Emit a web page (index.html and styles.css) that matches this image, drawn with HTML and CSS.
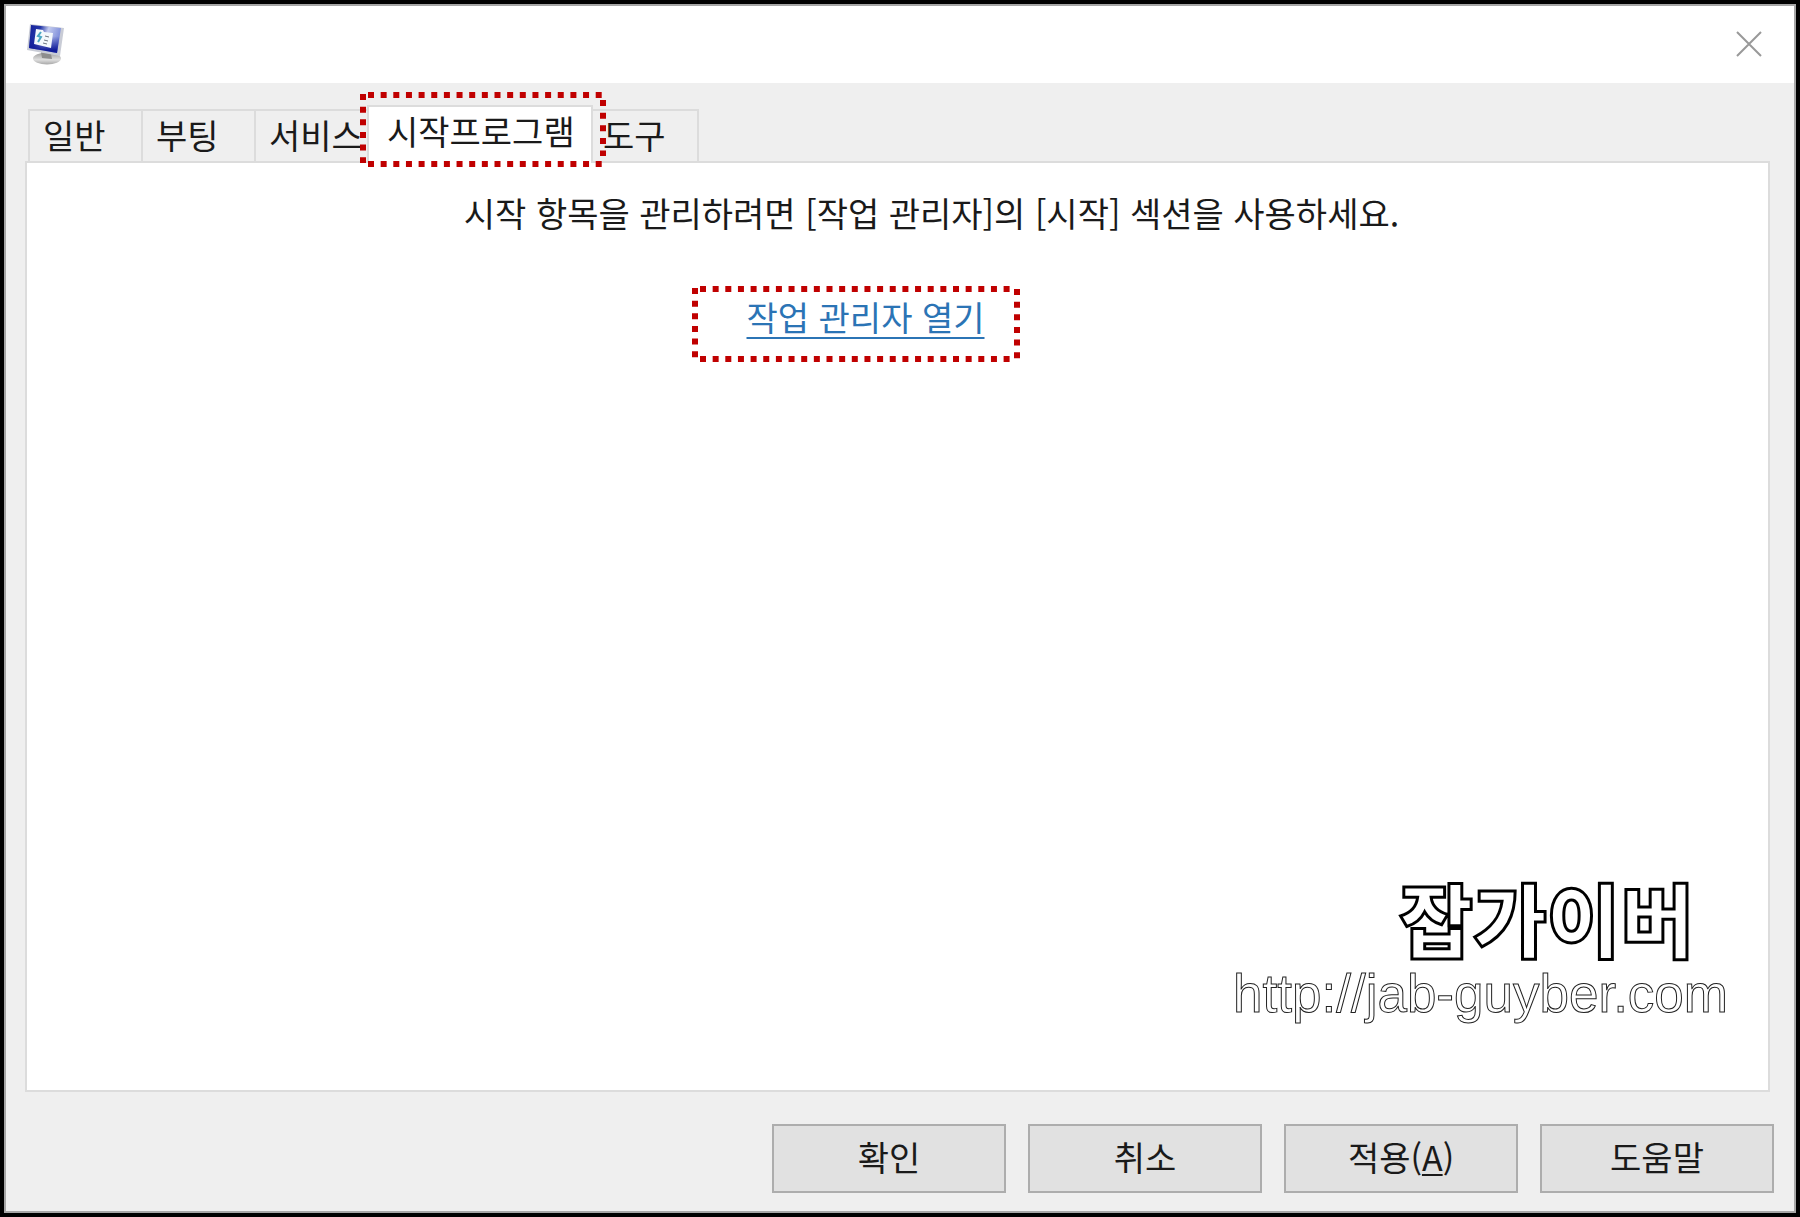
FILE: index.html
```html
<!DOCTYPE html>
<html lang="ko">
<head>
<meta charset="utf-8">
<meta name="viewport" content="width=device-width, initial-scale=1">
<title>시스템 구성</title>
<link rel="stylesheet" href="styles.css">
</head>
<body>
<div class="window">
  <header class="titlebar">
    <svg class="app-icon" viewBox="0 0 38 42" aria-hidden="true">
      <defs>
        <linearGradient id="screen" x1="0" y1="0" x2="1" y2="0.3">
          <stop offset="0" stop-color="#14209a"/>
          <stop offset="0.35" stop-color="#2436a8"/>
          <stop offset="0.6" stop-color="#c3cbee"/>
          <stop offset="1" stop-color="#7c8cda"/>
        </linearGradient>
        <linearGradient id="shade" x1="0" y1="0" x2="0" y2="1">
          <stop offset="0.4" stop-color="#101c98" stop-opacity="0"/>
          <stop offset="0.9" stop-color="#101c98"/>
        </linearGradient>
        <linearGradient id="foot" x1="0" y1="0" x2="0" y2="1">
          <stop offset="0" stop-color="#9c9c9c"/>
          <stop offset="0.6" stop-color="#dedede"/>
          <stop offset="1" stop-color="#a8a8a8"/>
        </linearGradient>
      </defs>
      <ellipse cx="21" cy="35.500" rx="14" ry="6" fill="url(#foot)"/>
      <path d="M15 29l10 2 1 5-10-1z" fill="#8d8d8d"/>
      <path d="M4 1L38 5 34 33 1 27z" fill="#c9ccd6"/>
      <path d="M5 2L35 5 31 30 3 25z" fill="url(#screen)"/>
      <path d="M5 2L35 5 31 30 3 25z" fill="url(#shade)"/>
      <path d="M10 6L17 7 18 9 27 10 25 25 8 21z" fill="#f3f8fc"/>
      <path d="M15 9l-3 4 3 1-3 5" fill="none" stroke="#4aa7c4" stroke-width="2"/>
      <path d="M19 13l4 1M18 17l4 1M17 20l4 1" stroke="#6d7580" stroke-width="1"/>
    </svg>
    <button class="close" type="button" aria-label="닫기">
      <svg viewBox="0 0 26 26" aria-hidden="true"><path d="M1 1L25 25M25 1L1 25"/></svg>
    </button>
  </header>

  <main class="body">
    <div class="tabs" role="tablist">
      <button class="tab" type="button" role="tab">일반</button>
      <button class="tab" type="button" role="tab">부팅</button>
      <button class="tab" type="button" role="tab">서비스</button>
      <button class="tab tab-active" type="button" role="tab" aria-selected="true">시작프로그램
        <svg class="mark mark-tab" viewBox="0 0 246 75" aria-hidden="true">
          <path d="M8 3H243"/><path d="M243 8V64"/><path d="M8 72H243"/><path d="M3 2V71"/>
        </svg>
      </button>
      <button class="tab tab-last" type="button" role="tab">도구</button>
    </div>

    <section class="panel" role="tabpanel">
      <p class="message">시작 항목을 관리하려면 [작업 관리자]의 [시작] 섹션을 사용하세요.</p>
      <p class="action">
        <a class="link" href="#">작업 관리자 열기
          <svg class="mark mark-link" viewBox="0 0 328 76" aria-hidden="true">
            <path d="M8 3H320"/><path d="M325 3V73"/><path d="M8 73H320"/><path d="M3 2V73"/>
          </svg></a>
      </p>
      <div class="watermark">
        <div class="watermark-name">잡가이버</div>
        <div class="watermark-url">http://jab-guyber.com</div>
      </div>
    </section>

    <footer class="buttons">
      <button class="button" type="button">확인</button>
      <button class="button" type="button">취소</button>
      <button class="button" type="button">적용(<u>A</u>)</button>
      <button class="button" type="button">도움말</button>
    </footer>
  </main>
</div>
</body>
</html>
```
FILE: styles.css
```css
* {
  box-sizing: border-box;
}

body {
  margin: 0;
  background: #000;
  color: #1a1a1a;
  font-family: "Noto Sans CJK KR", "Noto Sans", sans-serif;
  font-size: 34px;
  line-height: 40px;
}

button {
  font: inherit;
  color: inherit;
}

.window {
  display: flex;
  flex-direction: column;
  min-height: 100vh;
  border: 4px solid #000;
  background: #efefef;
  box-shadow: inset 0 0 0 2px #a6a6a6;
  padding: 2px;
}

.titlebar {
  display: flex;
  justify-content: space-between;
  align-items: flex-start;
  height: 77px;
  padding: 17px 24px 0 20px;
  background: #fff;
}

.app-icon {
  width: 38px;
  height: 42px;
}

.close {
  width: 42px;
  height: 42px;
  padding: 8px;
  border: 0;
  background: none;
}

.close svg {
  display: block;
  width: 26px;
  height: 26px;
  fill: none;
  stroke: #999;
  stroke-width: 2;
}

.body {
  display: flex;
  flex: 1;
  flex-direction: column;
  padding: 22px 20px 18px;
}

.tabs {
  display: flex;
  align-items: flex-end;
  padding-left: 2px;
}

.tab {
  width: 113px;
  height: 52px;
  padding: 0 0 2px 13px;
  border: 2px solid #dcdcdc;
  border-right: 0;
  border-bottom: 0;
  background: #efefef;
  text-align: left;
  white-space: nowrap;
}

.tab-active {
  position: relative;
  z-index: 1;
  width: 226px;
  height: 58px;
  margin-bottom: -2px;
  padding: 0 0 8px 18px;
  border-right: 2px solid #dcdcdc;
  background: #fff;
}

.tab-last {
  width: 106px;
  padding-left: 10px;
  border-left: 0;
  border-right: 2px solid #dcdcdc;
}

.mark {
  position: absolute;
  fill: none;
  stroke: #c00000;
  stroke-width: 6;
  stroke-dasharray: 6 6.65;
}

.mark-tab {
  top: -15px;
  left: -9px;
  width: 246px;
  height: 75px;
}

.mark-link {
  top: -6px;
  left: -55px;
  width: 328px;
  height: 76px;
}

.panel {
  position: relative;
  flex: 1;
  margin-right: 4px;
  margin-left: -1px;
  padding: 30px 0;
  border: 2px solid #dcdcdc;
  background: #fff;
  text-align: center;
}

.message {
  margin: 0;
  padding-left: 68px;
}

.action {
  margin: 64px 0 0;
  padding-right: 64px;
}

.link {
  position: relative;
  color: #2b74b5;
  text-decoration: underline;
  text-decoration-thickness: 2px;
  text-underline-offset: 6px;
}

.watermark {
  position: absolute;
  right: 40px;
  bottom: 62px;
  color: #fff;
  text-align: right;
}

.watermark-name {
  padding-right: 34px;
  font-size: 80px;
  font-weight: 900;
  line-height: 88px;
  -webkit-text-stroke: 3px #000;
}

.watermark-url {
  font-family: "Liberation Sans", Arial, sans-serif;
  font-size: 53px;
  line-height: 68px;
  -webkit-text-stroke: 1px #222;
}

.buttons {
  display: flex;
  justify-content: flex-end;
  gap: 22px;
  padding-top: 32px;
}

.button {
  width: 234px;
  height: 69px;
  padding: 0 0 4px;
  border: 2px solid #adadad;
  background: #e1e1e1;
}

.button u {
  text-decoration-thickness: 2px;
  text-underline-offset: 3px;
}
```
